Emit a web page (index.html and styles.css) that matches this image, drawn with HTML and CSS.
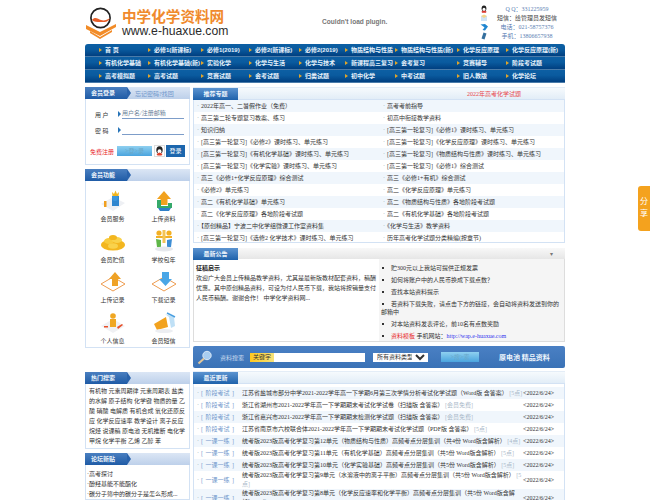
FILE: index.html
```html
<!DOCTYPE html>
<html lang="zh-CN">
<head>
    <meta charset="UTF-8">
    <title>中学化学资料网</title>
    <link rel="stylesheet" href="styles.css">
</head>
<body>
<div class="page">
    <!-- 顶部 -->
    <div class="header">
        <a class="logo">
            <svg class="logo-mark" width="34" height="34" viewBox="0 0 34 34">
                <circle cx="15.5" cy="12" r="9.6" fill="#fff" stroke="#222" stroke-width="1.7"/>
                <path d="M7 14 C10 10 13 13 16 14 S22 14 25 12 C23 17 18 16 15 16 S9 16 7 14Z" fill="#e8602a"/>
                <path d="M1 19 L15 26 L31 18 L31 21 L15 30 L1 23Z" fill="#f28c28"/>
                <path d="M5 25 L15 31 L27 24 L27 26 L15 33 L5 27Z" fill="#f28c28"/>
            </svg>
            <div class="logo-text">
                <div class="logo-cn">中学化学资料网</div>
                <div class="logo-en">www.e-huaxue.com</div>
            </div>
        </a>
        <div class="plugin">Couldn't load plugin.</div>
        <div class="contact">
            <div class="contact-row">
                <svg width="8" height="8" viewBox="0 0 8 8"><ellipse cx="4" cy="3.4" rx="2.4" ry="3" fill="#222"/><ellipse cx="4" cy="4.6" rx="1.5" ry="1.8" fill="#fff"/><path d="M1.5 6.5 L4 5.6 L6.5 6.5 L6 7.8 L2 7.8Z" fill="#d8332a"/></svg>
                <span class="contact-text">Q Q：331225959</span>
            </div>
            <div class="contact-row">
                <svg width="8" height="8" viewBox="0 0 8 8"><rect x="1" y="2" width="6" height="5" fill="#cfe3f5"/><path d="M1 2 L4 0.6 L7 2 L4 4Z" fill="#f4d68a"/></svg>
                <span class="contact-text dark">短信：给管理员发短信</span>
            </div>
            <div class="contact-row">
                <svg width="8" height="8" viewBox="0 0 8 8"><path d="M0.5 1.5 L5 1 L8 3.6 L5 7.5 L2.5 7 L4.5 4.5 L3 3.2Z" fill="#1f86d0"/></svg>
                <span class="contact-text">电话：021-58757376</span>
            </div>
            <div class="contact-row">
                <svg width="8" height="8" viewBox="0 0 8 8"><path d="M3.5 0.5 L6.5 1.5 L4.5 7.5 L1.5 6.5Z" fill="#356f9e"/></svg>
                <span class="contact-text">手机：13806657938</span>
            </div>
        </div>
    </div>

    <!-- 导航 -->
    <div class="nav">
        <a>首 页</a><a>必修1(新课标)</a><a>必修1(2019)</a><a>必修2(新课标)</a><a>必修2(2019)</a><a>物质结构与性质</a><a>物质结构与性质(新)</a><a>化学反应原理</a><a>化学反应原理(新)</a>
        <a>有机化学基础</a><a>有机化学基础(新)</a><a>实验化学</a><a>化学与生活</a><a>化学与技术</a><a>新课程高三复习</a><a>会考复习</a><a>竞赛辅导</a><a>阶段考试题</a>
        <a>高考模拟题</a><a>高考试题</a><a>竞赛试题</a><a>会考试题</a><a>归类试题</a><a>初中化学</a><a>中考试题</a><a>旧人教版</a><a>化学论坛</a>
    </div>

    <div class="content">
        <!-- 左侧 -->
        <div class="side">
            <div class="panel login">
                <div class="panel-head">
                    <span class="ribbon">会员登录</span>
                    <span class="forgot">忘记密码?找回</span>
                </div>
                <div class="field"><label>用 户</label><span class="pointer"></span><span class="field-input">用户名/注册邮箱</span></div>
                <div class="field"><label>密 码</label><span class="pointer"></span><span class="field-input"></span></div>
                <div class="login-actions">
                    <a class="register">免费注册</a>
                    <a class="sky-btn wide">&gt;登&gt;录</a>
                    <span class="qq-box">
                        <svg width="9" height="10" viewBox="0 0 9 10"><ellipse cx="4.5" cy="4" rx="3.2" ry="3.8" fill="#222"/><ellipse cx="4.5" cy="5.6" rx="2" ry="2.4" fill="#fff"/><path d="M1.5 8 L4.5 6.6 L7.5 8 L6.5 9.6 L2.5 9.6Z" fill="#e0402a"/></svg>
                    </span>
                    <a class="login-btn">登录</a>
                </div>
            </div>

            <div class="panel">
                <div class="panel-head"><span class="ribbon">会员功能</span></div>
                <div class="member-grid">
                    <a class="member">
                        <svg width="26" height="22" viewBox="0 0 26 22"><path d="M1 14 L13 7 L25 13 L13 21Z" fill="#eef0f4"/><path d="M12 6 L19 6 L19 16 L12 16Z" fill="#2f86cf"/><circle cx="15" cy="8" r="3" fill="#3b96dd"/><path d="M12 2 L14 4 L15.5 0.5 L17 4 L19 2 L18.5 6 L12.5 6Z" fill="#f3b51c"/><rect x="4" y="11" width="2.5" height="6" fill="#f0a020"/></svg>
                        <span>会员服务</span>
                    </a>
                    <a class="member">
                        <svg width="20" height="22" viewBox="0 0 20 22"><path d="M10 1 L17 9 L13.5 9 L13.5 15 L6.5 15 L6.5 9 L3 9Z" fill="#f2a21e"/><path d="M3 10 L7 10 L7 16 L14 16 L14 13 L18 13 L18 18 L3 18Z" fill="#35a96a"/><path d="M4 18 L17 18 L15 21 L6 21Z" fill="#2f7fc8"/></svg>
                        <span>上传资料</span>
                    </a>
                    <a class="member">
                        <svg width="26" height="20" viewBox="0 0 26 20"><ellipse cx="13" cy="12" rx="12" ry="5.5" fill="#f3b61f"/><ellipse cx="9" cy="8" rx="5" ry="3" fill="#f8cb3c"/><ellipse cx="17" cy="7" rx="5" ry="3" fill="#f9d24c"/><ellipse cx="13" cy="4.5" rx="4" ry="2.6" fill="#f3b61f"/><ellipse cx="13" cy="13" rx="5" ry="2.8" fill="#f9d24c"/></svg>
                        <span>会员贮值</span>
                    </a>
                    <a class="member">
                        <svg width="22" height="24" viewBox="0 0 22 24"><circle cx="6" cy="4" r="2.6" fill="#f3b023"/><circle cx="16" cy="4" r="2.6" fill="#f3b023"/><path d="M3 7 L19 7 L19 9 L3 9Z" fill="#f3b023"/><rect x="9.5" y="1" width="3" height="13" fill="#f3c458"/><path d="M3 10 L8 11 L8 19 L4 18Z" fill="#5fb648"/><path d="M14 11 L19 10 L18 18 L14 19Z" fill="#3e8ed4"/><ellipse cx="11" cy="20" rx="9" ry="2.4" fill="#e6e8ec"/></svg>
                        <span>学校包年</span>
                    </a>
                    <a class="member">
                        <svg width="26" height="22" viewBox="0 0 26 22"><path d="M1 13 L13 6 L25 13 L13 20Z" fill="#fff" stroke="#ee9c50" stroke-width="1"/><path d="M15 1 L21 8 L18 8 L18 15 L12 15 L12 8 L9 8Z" fill="#efa226"/></svg>
                        <span>上传记录</span>
                    </a>
                    <a class="member">
                        <svg width="26" height="22" viewBox="0 0 26 22"><path d="M1 13 L13 6 L25 13 L13 20Z" fill="#fff" stroke="#ee9c50" stroke-width="1"/><path d="M11 1 L18 1 L18 8 L21 8 L14.5 15 L8 8 L11 8Z" fill="#4aa6e6"/></svg>
                        <span>下载记录</span>
                    </a>
                    <a class="member">
                        <svg width="26" height="22" viewBox="0 0 26 22"><path d="M1 14 L13 7 L25 14 L13 21Z" fill="#f0f1f4"/><circle cx="13" cy="4" r="2.8" fill="#f0a722"/><path d="M10 7 L16 7 L16 15 L10 15Z" fill="#f0a722"/><path d="M17 15 L22 12 L23 13 L18 17Z" fill="#e8502a"/><rect x="4" y="14" width="4" height="1.5" fill="#e8502a"/></svg>
                        <span>个人信息</span>
                    </a>
                    <a class="member">
                        <svg width="26" height="22" viewBox="0 0 26 22"><path d="M3 12 L15 5 L17 15 L6 18Z" fill="#f2a21e"/><path d="M14 2 L23 5 L24 14 L20 16 L18 5Z" fill="#bfe0f6"/><path d="M16 1 L24 5" stroke="#4a9fe0" stroke-width="1.4"/><ellipse cx="13" cy="19" rx="9" ry="2" fill="#eceef2"/></svg>
                        <span>会员短信</span>
                    </a>
                </div>
            </div>

            <div class="panel hot">
                <div class="panel-head"><span class="ribbon">热门搜索</span></div>
                <p class="hot-links">有机物 元素周期律 元素周期表 盐类的水解 原子结构 化学键 物质的量 乙酸 硝酸 电解质 有机合成 氧化还原反应 化学反应速率 教学设计 离子反应 烷烃 说课稿 原电池 无机推断 电化学 甲烷 化学平衡 乙烯 乙醇 苯</p>
            </div>

            <div class="panel forum">
                <div class="panel-head"><span class="ribbon">论坛新贴</span></div>
                <ul class="forum-list">
                    <li>高考探讨</li>
                    <li>酚羟基能不能酯化</li>
                    <li>碳分子筛中的碳分子是怎么形成...</li>
                </ul>
            </div>
        </div>

        <!-- 右侧 -->
        <div class="main">
            <div class="box topics">
                <div class="box-head">
                    <span class="tab">推荐专题</span>
                    <span class="head-link">2022年高考化学试题</span>
                </div>
                <div class="topic-grid">
                    <a>2022年高一、二暑假作业（免费）</a><a>高考考前指导</a>
                    <a>高三第二轮专题复习教案、练习</a><a>初高中衔接教学资料</a>
                    <a>知识归纳</a><a>[高三第一轮复习]《必修1》课时练习、单元练习</a>
                    <a>[高三第一轮复习]《必修2》课时练习、单元练习</a><a>[高三第一轮复习]《化学反应原理》课时练习、单元练习</a>
                    <a>[高三第一轮复习]《有机化学基础》课时练习、单元练习</a><a>[高三第一轮复习]《物质结构与性质》课时练习、单元练习</a>
                    <a>[高三第一轮复习]《化学实验》课时练习、单元练习</a><a>[高三第一轮复习]《必修1》综合测试</a>
                    <a>高三《必修1+化学反应原理》综合测试</a><a>高三《必修1+有机》综合测试</a>
                    <a>《必修2》单元练习</a><a>高二《化学反应原理》单元练习</a>
                    <a>高二《有机化学基础》单元练习</a><a>高二《物质结构与性质》各地阶段考试题</a>
                    <a>高二《化学反应原理》各地阶段考试题</a><a>高二《有机化学基础》各地阶段考试题</a>
                    <a>【原创精品】宁波二中化学组微课工作室资料集</a><a>《化学与生活》教学资料</a>
                    <a>[高三第一轮复习]《选修2 化学技术》课时练习、单元练习</a><a>历年高考化学试题分类精编(按章节)</a>
                </div>
            </div>

            <div class="box notice">
                <div class="notice-head">
                    <span class="tab">最新公告</span>
                    <span class="collapse">▾</span>
                </div>
                <div class="notice-body">
                    <div class="notice-text">
                        <h4>征稿启示</h4>
                        <p>欢迎广大会员上传精品教学资料，尤其是最新版教材配套资料，稿酬优惠。其中原创精品资料，可设为付人民币下载，我站将按销量支付人民币稿酬。谢谢合作！ 中学化学资料网...</p>
                    </div>
                    <ul class="notice-list">
                        <li>贮300元以上我站可提供正规发票</li>
                        <li>如何将账户中的人民币换成下载点数？</li>
                        <li>查找本站资料提示</li>
                        <li>若资料下载失败，请点击下方的链接，会自动将资料发送到你的邮箱中</li>
                        <li>对本站资料发表评论，前10名有点数奖励</li>
                        <li><span class="red">资料模板</span> 手机网站：<span class="wap">http://wap.e-huaxue.com</span></li>
                    </ul>
                </div>
            </div>

            <div class="search-bar">
                <svg width="16" height="15" viewBox="0 0 16 15"><circle cx="10" cy="5.5" r="4.2" fill="#a9cdf0" stroke="#d7e7f7" stroke-width="1"/><path d="M7 8.5 L1.5 13.5" stroke="#e3c79a" stroke-width="2"/></svg>
                <span class="search-label">资料搜索</span>
                <span class="keyword">关键字</span>
                <span class="search-input"></span>
                <select class="search-type"><option>所有资料类型</option></select>
                <a class="sky-btn search-btn">&gt;搜&gt;索</a>
                <span class="search-tags">原电池 精品资料</span>
            </div>

            <div class="box latest">
                <div class="box-head"><span class="tab">最近更新</span></div>
                <div class="latest-list">
                    <div class="item"><span class="kind">[ 阶段考试 ]</span><span class="title">江苏省盐城市部分中学2021-2022学年高一下学期6月第三次学情分析考试化学试题（Word版 含答案） <em>[5点]</em></span><span class="date">&lt;2022/6/24&gt;</span></div>
                    <div class="item"><span class="kind">[ 阶段考试 ]</span><span class="title">浙江省湖州市2021-2022学年高一下学期期末考试化学试卷（扫描版 含答案） <em>[会员免费]</em></span><span class="date">&lt;2022/6/24&gt;</span></div>
                    <div class="item"><span class="kind">[ 阶段考试 ]</span><span class="title">浙江省嘉兴市2021-2022学年高一下学期期末检测化学试题（扫描版 含答案） <em>[会员免费]</em></span><span class="date">&lt;2022/6/24&gt;</span></div>
                    <div class="item"><span class="kind">[ 阶段考试 ]</span><span class="title">江苏省南京市六校联合体2021-2022学年高一下学期期末考试化学试题（PDF版 含答案） <em>[5点]</em></span><span class="date">&lt;2022/6/24&gt;</span></div>
                    <div class="item"><span class="kind">[ 一课一练 ]</span><span class="title">统考版2023版高考化学复习第12单元（物质结构与性质）高频考点分层集训（共4份 Word版含解析） <em>[4点]</em></span><span class="date">&lt;2022/6/24&gt;</span></div>
                    <div class="item"><span class="kind">[ 一课一练 ]</span><span class="title">统考版2023版高考化学复习第11单元（有机化学基础）高频考点分层集训（共5份 Word版含解析） <em>[5点]</em></span><span class="date">&lt;2022/6/24&gt;</span></div>
                    <div class="item"><span class="kind">[ 一课一练 ]</span><span class="title">统考版2023版高考化学复习第10单元（化学实验基础）高频考点分层集训（共5份 Word版含解析） <em>[5点]</em></span><span class="date">&lt;2022/6/24&gt;</span></div>
                    <div class="item"><span class="kind">[ 一课一练 ]</span><span class="title">统考版2023版高考化学复习第9单元（水溶液中的离子平衡）高频考点分层集训（共5份 Word版含解析） <em>[5点]</em></span><span class="date">&lt;2022/6/24&gt;</span></div>
                    <div class="item"><span class="kind">[ 一课一练 ]</span><span class="title">统考版2023版高考化学复习第8单元（化学反应速率和化学平衡）高频考点分层集训（共5份 Word版含解析） <em>[5点]</em></span><span class="date">&lt;2022/6/24&gt;</span></div>
                </div>
            </div>
        </div>
    </div>
</div>

<a class="share">分<br>享</a>
</body>
</html>
```

FILE: styles.css
```css
html {
    overflow: hidden;
}

body {
    margin: 0;
    background: #fff;
    color: #333;
    font-family: "Liberation Serif", "Noto Sans CJK SC", serif;
    font-size: 6px;
}

a {
    color: inherit;
}

ul,
p,
h4 {
    margin: 0;
    padding: 0;
}

.page {
    width: 480px;
    margin: 0 auto;
}

/* 顶部 */
.header {
    display: flex;
    height: 44px;
}

.logo {
    display: flex;
    width: 237px;
    padding-top: 6px;
    box-sizing: border-box;
}

.logo-mark {
    margin-right: 3px;
    overflow: visible;
}

.logo-cn {
    color: #f08a2c;
    font-family: "Noto Sans CJK SC", sans-serif;
    font-size: 14.6px;
    font-weight: 700;
    line-height: 19px;
    white-space: nowrap;
}

.logo-en {
    color: #2b2b2b;
    font-family: "Liberation Sans", sans-serif;
    font-size: 12.2px;
    line-height: 12px;
    white-space: nowrap;
}

.plugin {
    width: 158px;
    padding-top: 18px;
    color: #777;
    font-family: "Liberation Sans", sans-serif;
    font-size: 6.6px;
    font-weight: 700;
}

.contact {
    padding-top: 4px;
}

.contact-row {
    display: flex;
    align-items: center;
    height: 9px;
}

.contact-text {
    width: 62px;
    margin-left: 8px;
    color: #5b80b4;
    text-align: center;
    white-space: nowrap;
}

.contact-text.dark {
    color: #444;
}

/* 导航 */
.nav {
    display: grid;
    grid-template-columns: 49px 53px 48px 50px 46px 50px 62px 49px 59px;
    grid-auto-rows: 13px;
    height: 39px;
    padding-left: 14px;
    border-radius: 3px 3px 0 0;
    background: linear-gradient(#0d5fa3, #0a5b9f 40%, #003f80 92%, #8fb3d0) 0 0 / 100% 13px;
    color: #e8f2fb;
    font-family: "Liberation Sans", "Noto Sans CJK SC", sans-serif;
    font-weight: 700;
}

.nav a {
    position: relative;
    padding-left: 6px;
    line-height: 12px;
    white-space: nowrap;
}

.nav a::before {
    content: "";
    position: absolute;
    left: 0;
    top: 4px;
    border-left: 3px solid #e0a52a;
    border-top: 2px solid transparent;
    border-bottom: 2px solid transparent;
}

/* 主体 */
.content {
    display: flex;
    justify-content: space-between;
    margin-top: 4px;
}

.side {
    display: flex;
    flex-direction: column;
    width: 105px;
    gap: 4px;
}

.main {
    display: flex;
    flex-direction: column;
    width: 372px;
}

/* 左侧面板 */
.panel {
    border: 1px solid #d3e2f4;
    background: #fff;
}

.panel-head {
    display: flex;
    align-items: center;
    height: 12px;
    margin: -1px -1px 0;
    background: linear-gradient(#dbe6f5, #bdd0ea);
}

.ribbon {
    position: relative;
    width: 36px;
    height: 12px;
    padding-left: 6px;
    background: linear-gradient(#4a7fc0, #1f5ba6);
    color: #eef5fc;
    font-weight: 700;
    line-height: 12px;
}

.ribbon::after {
    content: "";
    position: absolute;
    left: 100%;
    top: 0;
    border-left: 4px solid #2a63ac;
    border-top: 6px solid transparent;
    border-bottom: 6px solid transparent;
}

.forgot {
    margin-left: 8px;
    color: #6f96cb;
}

.login {
    height: 78px;
    box-sizing: border-box;
}

.field {
    display: flex;
    align-items: center;
    height: 16px;
    padding-left: 9px;
}

.panel-head + .field {
    margin-top: 7px;
}

.field label {
    width: 23px;
}

.pointer {
    border-left: 3px solid #2874b8;
    border-top: 3px solid transparent;
    border-bottom: 3px solid transparent;
}

.field-input {
    width: 62px;
    height: 9px;
    margin-left: 1px;
    border-bottom: 1px solid #7d9dc9;
    color: #6b7f99;
    line-height: 9px;
}

.login-actions {
    display: flex;
    align-items: center;
    margin-top: 7px;
    padding-left: 4px;
}

.register {
    width: 27px;
    color: #e8282a;
}

.sky-btn {
    background: linear-gradient(#8fd0f0, #4aa4de);
    color: #6aa8c8;
    text-align: center;
}

.sky-btn.wide {
    width: 35px;
    height: 10px;
    line-height: 10px;
}

.qq-box {
    display: flex;
    align-items: center;
    justify-content: center;
    width: 11px;
    height: 12px;
    margin-left: 2px;
    border: 1px solid #ddd;
    box-sizing: border-box;
}

.login-btn {
    width: 19px;
    height: 12px;
    margin-left: 1px;
    background: #1c66ad;
    color: #fff;
    text-align: center;
    line-height: 12px;
}

.member-grid {
    display: grid;
    grid-template-columns: 51px 51px;
    grid-auto-rows: 40.4px;
    padding: 3px 0 1px 1px;
}

.member {
    display: flex;
    flex-direction: column;
    align-items: center;
    justify-content: flex-end;
    line-height: 9px;
}

.member svg {
    margin-bottom: 3px;
}

.hot {
    height: 77px;
    margin-top: 20px;
    box-sizing: border-box;
}

.hot-links {
    padding: 2px 3px;
    line-height: 10px;
}

.forum-list {
    padding: 4px 0 0 1px;
    list-style: none;
    line-height: 10px;
}

.forum-list li::before {
    content: "·";
}

/* 右侧区块 */
.box {
    border: 1px solid #d3e2f4;
    background: #fff;
}

.box-head {
    display: flex;
    align-items: center;
    height: 11px;
    margin: -1px -1px 0;
    border-top: 1px solid #e4edf7;
    border-bottom: 1px solid #d3e2f4;
    background: linear-gradient(#f6fafd, #e2edf7);
}

.tab {
    display: block;
    width: 45px;
    height: 12px;
    flex: none;
    background: linear-gradient(#5b93d0, #1f62ab);
    color: #eef5fc;
    font-weight: 700;
    text-align: center;
    line-height: 12px;
}

.head-link {
    margin-left: 229px;
    color: #e8464a;
}

.topics {
    height: 156px;
    box-sizing: border-box;
}

.topic-grid {
    display: grid;
    grid-template-columns: 186px 184px;
    grid-auto-rows: 12px;
}

.topic-grid a {
    padding-left: 3px;
    line-height: 12px;
    white-space: nowrap;
}

.topic-grid a::before {
    content: "·";
    margin-right: 2px;
    color: #8aa;
}

.topic-grid a:nth-child(4n+1),
.topic-grid a:nth-child(4n+2) {
    background: #f0f6fc;
}

.notice {
    height: 94px;
    margin-top: 5px;
    box-sizing: border-box;
    border-color: #ddd;
}

.notice-head {
    display: flex;
    align-items: center;
    justify-content: space-between;
    height: 11px;
    margin: -1px -1px 0;
    background: linear-gradient(#f8f8f8, #e6e6e6);
}

.collapse {
    margin-right: 12px;
    color: #777;
}

.notice-body {
    display: flex;
    height: 82px;
}

.notice-text {
    width: 185px;
    padding: 4px 2px;
    box-sizing: border-box;
    line-height: 10px;
}

.notice-text h4 {
    color: #222;
    font-size: 6px;
}

.notice-list {
    flex: 1;
    padding: 5px 2px;
    background: #f5f5f5;
    list-style: none;
    line-height: 8.4px;
}

.notice-list li {
    margin-bottom: 3.6px;
}

.notice-list li::before {
    content: "";
    display: inline-block;
    width: 2px;
    height: 2px;
    margin: 0 7px 1px 1px;
    background: #333;
}

.red {
    color: #e8282a;
}

.wap {
    color: #3333ee;
}

/* 搜索条 */
.search-bar {
    display: flex;
    align-items: center;
    height: 22px;
    margin-top: 4px;
    padding-left: 4px;
    border-radius: 2px;
    background: linear-gradient(#4a80c4, #3a72b6);
    color: #c9dbef;
}

.search-label {
    margin-left: 7px;
    width: 30px;
}

.keyword {
    width: 24px;
    height: 9px;
    background: linear-gradient(90deg, #ffc81e, #f6e27a);
    color: #333;
    text-align: center;
    line-height: 9px;
}

.search-input {
    width: 91px;
    height: 9px;
    background: #fff;
}

.search-type {
    width: 55px;
    height: 9px;
    margin-left: 8px;
    padding: 0;
    border: 0;
    background: #fff;
    color: #333;
    font-family: inherit;
    font-size: 6px;
}

.search-btn {
    width: 38px;
    height: 10px;
    margin-left: 13px;
    line-height: 10px;
}

.search-tags {
    margin-left: 20px;
    color: #eef5fc;
    font-size: 7px;
    font-weight: 700;
}

/* 最近更新 */
.latest {
    margin-top: 3px;
}

.latest-list {
    padding-top: 3px;
}

.item {
    display: flex;
    align-items: center;
    min-height: 12px;
    box-sizing: border-box;
    line-height: 9px;
}

.item:nth-child(odd) {
    background: #f0f6fc;
}

.kind {
    width: 48px;
    padding-left: 3px;
    box-sizing: border-box;
    flex: none;
    color: #6f96cb;
    word-spacing: 1px;
    white-space: nowrap;
}

.kind::before {
    content: "·";
    margin-right: 2px;
    color: #8aa;
}

.title {
    width: 281px;
    flex: none;
}

.title em {
    color: #a9b8c8;
    font-style: normal;
}

.date {
    white-space: nowrap;
}

/* 右侧分享 */
.share {
    position: fixed;
    right: 0;
    top: 186px;
    width: 12px;
    height: 45px;
    padding-top: 9px;
    box-sizing: border-box;
    border-radius: 3px 0 0 3px;
    background: #f4a21e;
    color: #fff;
    font-family: "Noto Sans CJK SC", sans-serif;
    font-size: 8px;
    line-height: 12px;
    text-align: center;
}
```
